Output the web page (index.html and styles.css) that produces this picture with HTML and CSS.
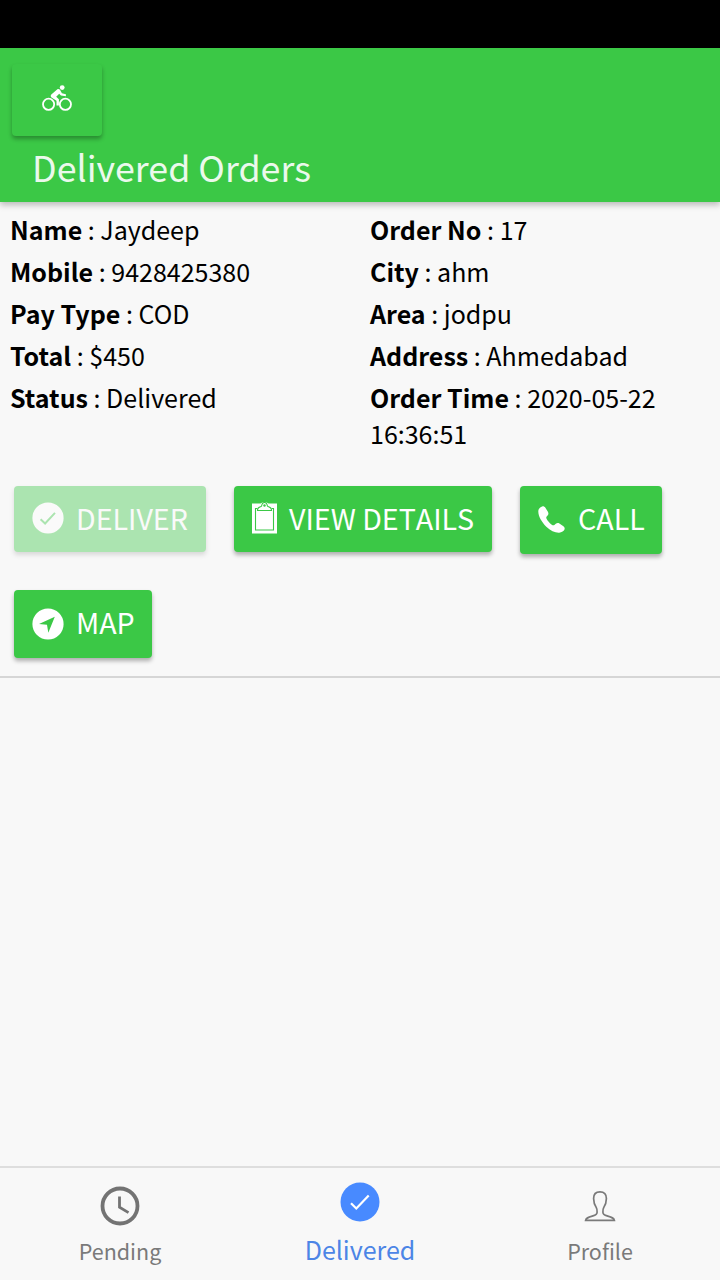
FILE: index.html
```
<!DOCTYPE html>
<html>
<head>
  <title>Delivered Orders</title>
  <meta charset="utf-8" />
  <meta name="viewport" content="width=device-width, initial-scale=1.0" />
  <link rel="stylesheet" href="styles.css">
</head>
<body>
  <div class="statusbar"></div>
  <header class="header">
    <button class="btn btn-bike">
      <svg width="30" height="26" viewBox="0 0 30 26">
        <g fill="none" stroke="#fff" stroke-width="1.8">
          <circle cx="6.6" cy="19.3" r="5.6"/>
          <circle cx="23.4" cy="19.3" r="5.6"/>
        </g>
        <circle cx="20.2" cy="2.6" r="2.4" fill="#fff"/>
        <path fill="#fff" d="M15.4 4.2c.9-.5 2-.2 2.6.6l1.9 3.5 4 1v2l-5-.7-1.7-1.9-3 3.1 2.7 2.4v6.3h-2.4v-4.8l-5-3.2c-1-.8-1-2-.2-2.9z"/>
      </svg>
    </button>
    <h1 class="title">Delivered Orders</h1>
  </header>

  <main class="content">
    <section class="order">
      <div class="cols">
        <div class="col">
          <p><b>Name</b> : Jaydeep</p>
          <p><b>Mobile</b> : 9428425380</p>
          <p><b>Pay Type</b> : COD</p>
          <p><b>Total</b> : $450</p>
          <p><b>Status</b> : Delivered</p>
        </div>
        <div class="col">
          <p><b>Order No</b> : 17</p>
          <p><b>City</b> : ahm</p>
          <p><b>Area</b> : jodpu</p>
          <p><b>Address</b> : Ahmedabad</p>
          <p><b>Order Time</b> : 2020-05-22 16:36:51</p>
        </div>
      </div>
      <div class="actions">
        <button class="btn btn-deliver" disabled>
          <svg width="32" height="32" viewBox="0 0 32 32">
            <circle cx="16" cy="16" r="15.6" fill="#fff"/>
            <path d="M8.6 17.3l4.5 4.2L23 10.9" fill="none" stroke="#3bc846" stroke-width="2"/>
          </svg>
          <span>DELIVER</span>
        </button>
        <button class="btn btn-details">
          <svg width="25" height="32" viewBox="0 0 25 32">
            <path fill="#fff" d="M0 1.5h8.5Q10 0 12.5 0t4 1.5H25V31.5H0z"/>
            <path fill="none" stroke="#3bc846" stroke-width="1.1" d="M5.5 6.5h-2v21.5h18v-21.5h-2"/>
            <path fill="#fff" stroke="#3bc846" stroke-width="1.1" d="M5.5 8.5c0-3 1.5-3.5 3-3.8 1.2-.2 1.4-1 1.5-2.2.2-1.3 1.2-2 2.5-2s2.3.7 2.5 2c.1 1.2.3 2 1.500 2.200 1.500.3 3 .8 3 3.800z"/>
            <circle cx="12.5" cy="3.5" r="1.2" fill="#3bc846"/>
          </svg>
          <span>VIEW DETAILS</span>
        </button>
        <button class="btn btn-call">
          <svg width="27" height="27" viewBox="0 0 27 27">
            <path fill="#fff" d="M4.200.4C2.200.8.300 2.900.3 5.500c0 4.600 3.400 10.700 8 15.200 4.100 4 9 6.200 12.800 6 2.600-.2 5-1.700 5.500-3.500.3-1.200-.2-2.200-1.200-3l-4-2.700c-1.300-.8-2.500-.6-3.600.3l-1.400 1.200c-.7.600-1.700.4-3-.6-2-1.600-3.700-3.500-4.700-5.400-.6-1.100-.6-1.800 0-2.500l1.100-1.300c.8-1 .8-2.300.1-3.500L7.400 1.800C6.600.6 5.500.1 4.200.4z"/>
          </svg>
          <span>CALL</span>
        </button>
        <button class="btn btn-map">
          <svg width="32" height="32" viewBox="0 0 32 32">
            <circle cx="16" cy="16" r="15.6" fill="#fff"/>
            <path fill="#3bc846" d="M22.8 8.7L7 15.9l8 .8 1.3 8.1z"/>
          </svg>
          <span>MAP</span>
        </button>
      </div>
    </section>
  </main>

  <nav class="tabs">
    <a class="tab">
      <svg width="40" height="40" viewBox="0 0 40 40" fill="none" stroke="#737373">
        <circle cx="20" cy="20" r="17.5" stroke-width="3.8"/>
        <path d="M19.5 10.5v10.8l9 5.3" stroke-width="2.8"/>
      </svg>
      <span>Pending</span>
    </a>
    <a class="tab active">
      <svg width="40" height="40" viewBox="0 0 40 40">
        <circle cx="20" cy="20" r="19.5" fill="#488aff"/>
        <path d="M11 21.2l5.3 5.3L28.7 13.5" fill="none" stroke="#fff" stroke-width="2.2"/>
      </svg>
      <span>Delivered</span>
    </a>
    <a class="tab">
      <svg width="40" height="40" viewBox="0 0 40 40" fill="none" stroke="#7a7a7a" stroke-width="1.7">
        <path d="M20 5.800c-4.300 0-6.400 2.500-6.400 6.600 0 4 .8 6.200 2.700 9.200 1 1.600.9 3.200.8 4.600-.1 2-1.500 2.900-4.200 3.700-4.400 1.200-6.800 1.700-7.300 4.400h28.800c-.5-2.700-2.900-3.200-7.300-4.400-2.700-.8-4.100-1.700-4.200-3.700-.1-1.400-.2-3 .8-4.600 1.900-3 2.700-5.200 2.700-9.200 0-4.100-2.100-6.600-6.400-6.600z"/>
      </svg>
      <span>Profile</span>
    </a>
  </nav>
</body>
</html>
```
FILE: styles.css
```
* {
  box-sizing: border-box;
}

body {
  font-family: "Noto Sans CJK SC", "Noto Sans", sans-serif;
  background: #f8f8f8;
  color: #000;
  margin: 0;
  height: 1280px;
  display: flex;
  flex-direction: column;
}

h1, p {
  margin: 0;
  font-weight: normal;
}

svg {
  display: block;
  flex: none;
}

.statusbar {
  height: 48px;
  background: #000;
}

.header {
  height: 154px;
  padding: 16px 12px 0;
  background: #3bc846;
  box-shadow: 0 3px 6px rgba(0,0,0,0.25);
}

.title {
  color: #fff;
  font-size: 35.8px;
  line-height: 56px;
  padding: 2px 0 0 20px;
  opacity: .9;
}

.btn {
  display: flex;
  align-items: center;
  height: 66px;
  padding: 0 0 0 18px;
  border: 0;
  border-radius: 4px;
  background: #3bc846;
  color: #fff;
  font-family: inherit;
  font-size: 28.6px;
  font-kerning: none;
  line-height: 40px;
  white-space: nowrap;
  box-shadow: 0 3px 4px rgba(0,0,0,0.3);
}

.btn span {
  margin-top: -2px;
}

.btn-bike {
  width: 90px;
  height: 72px;
  justify-content: center;
  padding: 0 0 4px 0;
}

.content {
  flex: 1;
}

.order {
  height: 476px;
  border-bottom: 2px solid #d6d6d6;
}

.cols {
  display: grid;
  grid-template-columns: 1fr 1fr;
  padding-top: 9px;
}

.col {
  padding-left: 10px;
}

.col p {
  font-size: 25.03px;
  line-height: 36px;
  margin-bottom: 6px;
}

.actions {
  display: flex;
  flex-wrap: wrap;
  align-items: flex-start;
  padding: 29px 14px 0;
  column-gap: 28px;
  row-gap: 36px;
}

.btn-deliver {
  width: 192px;
  gap: 12px;
  opacity: .4;
}

.btn-deliver svg {
  margin-top: -3px;
}

.btn-details {
  width: 258px;
  gap: 12px;
}

.btn-details svg {
  margin-top: -2px;
}

.btn-call {
  width: 142px;
  height: 68px;
  gap: 13px;
}

.btn-call svg {
  margin-top: -1px;
}

.btn-map {
  width: 138px;
  height: 68px;
  gap: 12px;
}

.btn-call span,
.btn-map span {
  margin-top: -4px;
}

.tabs {
  display: grid;
  grid-template-columns: repeat(3, 1fr);
  height: 114px;
  border-top: 2px solid #dedede;
}

.tab {
  display: flex;
  flex-direction: column;
  align-items: center;
  padding-top: 18px;
  color: #7a7a7a;
  font-size: 21.5px;
  line-height: 30px;
}

.tab span {
  margin-top: 10px;
}

.tab.active {
  padding-top: 14px;
  color: #4c85e6;
  font-size: 25px;
}

.tab.active span {
  margin-top: 12px;
}
```
